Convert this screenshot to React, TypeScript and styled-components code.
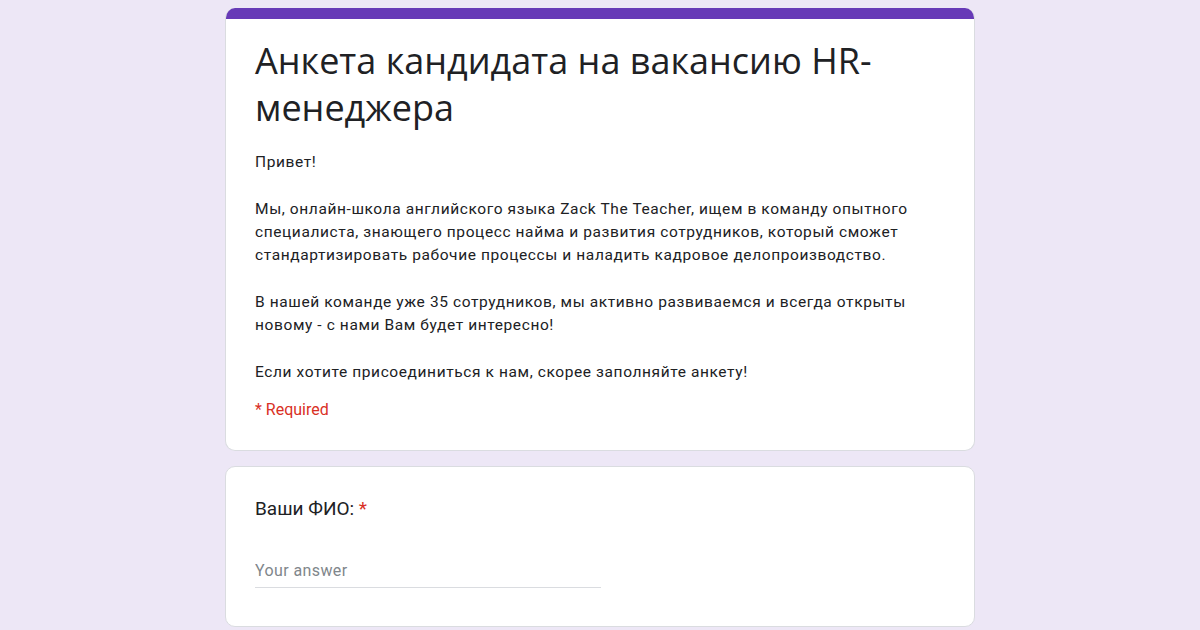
import styled, { createGlobalStyle } from 'styled-components';

const GlobalStyle = createGlobalStyle`
  html, body {
    margin: 0;
    padding: 0;
    background: #ede7f6;
  }
  body {
    font-family: Roboto, "Liberation Sans", Arial, sans-serif;
    color: #202124;
  }
`;

function App() {
  return (
    <>
      <GlobalStyle />
      <Page>
        <HeaderCard>
          <TopBand />
          <HeaderBody>
            <Title>Анкета кандидата на вакансию HR-менеджера</Title>
            <Description>
              <p>Привет!</p>
              <p>
                Мы, онлайн-школа английского языка Zack The Teacher, ищем в команду опытного
                специалиста, знающего процесс найма и развития сотрудников, который сможет
                стандартизировать рабочие процессы и наладить кадровое делопроизводство.
              </p>
              <p>
                В нашей команде уже 35 сотрудников, мы активно развиваемся и всегда открыты
                новому - с нами Вам будет интересно!
              </p>
              <p>Если хотите присоединиться к нам, скорее заполняйте анкету!</p>
            </Description>
            <RequiredNote>* Required</RequiredNote>
          </HeaderBody>
        </HeaderCard>

        <QuestionCard>
          <QuestionTitle>
            Ваши ФИО: <Star>*</Star>
          </QuestionTitle>
          <AnswerInput placeholder="Your answer" />
        </QuestionCard>
      </Page>
    </>
  );
}

//Styling
const Page = styled.main`
  width: 750px;
  margin: 0 auto;
  padding-top: 8px;
  display: flex;
  flex-direction: column;
  gap: 15px;
`;

const Card = styled.section`
  background: #fff;
  border: 1px solid #dadce0;
  border-radius: 10px;
  box-sizing: border-box;
  overflow: hidden;
`;

const HeaderCard = styled(Card)`
  border-top: none;
`;

const TopBand = styled.div`
  height: 11px;
  background: #673ab7;
`;

const HeaderBody = styled.div`
  padding: 18px 29px 29px;
`;

const Title = styled.h1`
  margin: 0;
  font-family: "Open Sans", Lato, sans-serif;
  font-weight: 400;
  font-size: 36px;
  line-height: 47px;
  color: #202124;
`;

const Description = styled.div`
  margin-top: 20px;
  font-size: 15.5px;
  line-height: 23.3px;
  letter-spacing: 0.6px;
  color: #202124;

  p {
    margin: 0 0 23.3px;
  }
  p:last-child {
    margin-bottom: 0;
  }
`;

const RequiredNote = styled.div`
  margin-top: 14px;
  font-size: 16px;
  line-height: 23px;
  color: #d93025;
`;

const QuestionCard = styled(Card)`
  padding: 30px 29px 38px;
`;

const QuestionTitle = styled.div`
  font-size: 19px;
  line-height: 24px;
  color: #202124;
`;

const Star = styled.span`
  color: #d93025;
`;

const AnswerInput = styled.input`
  display: block;
  margin-top: 40px;
  width: 346px;
  box-sizing: border-box;
  border: none;
  border-bottom: 1px solid #dadce0;
  padding: 0 0 6px;
  font-family: Roboto, "Liberation Sans", Arial, sans-serif;
  font-size: 16px;
  line-height: 20px;
  letter-spacing: 0.4px;
  color: #202124;
  outline: none;
  background: transparent;

  &::placeholder {
    color: #80868b;
  }
`;

export default App;
